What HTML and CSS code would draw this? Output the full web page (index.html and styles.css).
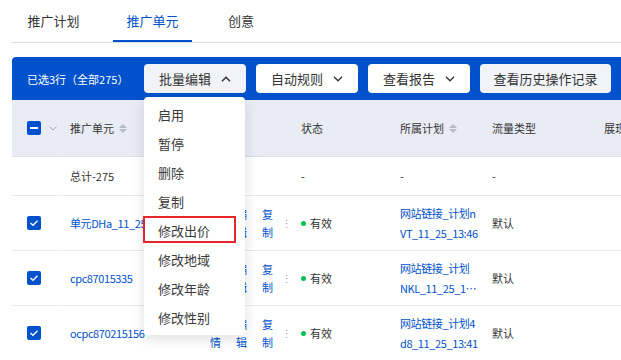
FILE: index.html
```html
<!DOCTYPE html>
<html lang="zh-CN">
<head>
    <meta charset="UTF-8">
    <meta name="viewport" content="width=device-width, initial-scale=1.0">
    <title>推广单元</title>
    <link rel="stylesheet" href="styles.css">
</head>
<body>

<div class="page">
    <div class="tabs">
        <div class="tab">推广计划</div>
        <div class="tab active">推广单元</div>
        <div class="tab">创意</div>
    </div>

    <div class="toolbar">
        <span class="selected">已选3行（全部275）</span>
        <div class="batch">
            <button class="btn btn-active">批量编辑
                <svg width="10" height="6" viewBox="0 0 10 6"><path d="M1 5.2L5 1.2L9 5.2" fill="none" stroke="#333" stroke-width="1.5"/></svg>
            </button>
            <div class="menu">
                <div class="menu-item">启用</div>
                <div class="menu-item">暂停</div>
                <div class="menu-item">删除</div>
                <div class="menu-item">复制</div>
                <div class="menu-item">修改出价<span class="mark"></span></div>
                <div class="menu-item">修改地域</div>
                <div class="menu-item">修改年龄</div>
                <div class="menu-item">修改性别</div>
            </div>
        </div>
        <button class="btn">自动规则
            <svg width="10" height="6" viewBox="0 0 10 6"><path d="M1 0.8L5 4.8L9 0.8" fill="none" stroke="#333" stroke-width="1.3"/></svg>
        </button>
        <button class="btn">查看报告
            <svg width="10" height="6" viewBox="0 0 10 6"><path d="M1 0.8L5 4.8L9 0.8" fill="none" stroke="#333" stroke-width="1.3"/></svg>
        </button>
        <button class="btn btn-wide btn-grey">查看历史操作记录</button>
    </div>

    <div class="table">
        <div class="row head">
            <div class="cell c-check">
                <span class="checkbox"><span class="minus"></span></span>
                <svg class="caret" width="8" height="5" viewBox="0 0 8 5"><path d="M0.5 0.5L4 4L7.5 0.5" fill="none" stroke="#a0a4ae" stroke-width="1"/></svg>
            </div>
            <div class="cell c-name">推广单元 <span class="sort"><i class="up"></i><i class="down"></i></span></div>
            <div class="cell c-ops">操作</div>
            <div class="cell c-status">状态</div>
            <div class="cell c-plan">所属计划 <span class="sort"><i class="up"></i><i class="down"></i></span></div>
            <div class="cell c-flow">流量类型</div>
            <div class="cell c-show">展现</div>
        </div>

        <div class="row total">
            <div class="cell c-check"></div>
            <div class="cell c-name">总计-275</div>
            <div class="cell c-ops"></div>
            <div class="cell c-status">-</div>
            <div class="cell c-plan">-</div>
            <div class="cell c-flow">-</div>
            <div class="cell c-show"></div>
        </div>

        <div class="row">
            <div class="cell c-check"><span class="checkbox"><svg width="10" height="8" viewBox="0 0 10 8"><path d="M1.5 4L4 6.3L8.5 1.8" fill="none" stroke="#fff" stroke-width="1.3"/></svg></span></div>
            <div class="cell c-name"><a class="link">单元DHa_11_25_13:46</a></div>
            <div class="cell c-ops"><a class="op">详情</a><a class="op">编辑</a><a class="op">复制</a><span class="more">⋮</span></div>
            <div class="cell c-status"><span class="dot"></span>有效</div>
            <div class="cell c-plan"><a class="plan"><span>网站链接_计划n</span><span>VT_11_25_13:46</span></a></div>
            <div class="cell c-flow">默认</div>
            <div class="cell c-show"></div>
        </div>

        <div class="row">
            <div class="cell c-check"><span class="checkbox"><svg width="10" height="8" viewBox="0 0 10 8"><path d="M1.5 4L4 6.3L8.5 1.8" fill="none" stroke="#fff" stroke-width="1.3"/></svg></span></div>
            <div class="cell c-name"><a class="link">cpc87015335</a></div>
            <div class="cell c-ops"><a class="op">详情</a><a class="op">编辑</a><a class="op">复制</a><span class="more">⋮</span></div>
            <div class="cell c-status"><span class="dot"></span>有效</div>
            <div class="cell c-plan"><a class="plan"><span>网站链接_计划</span><span>NKL_11_25_13:45:27</span></a></div>
            <div class="cell c-flow">默认</div>
            <div class="cell c-show"></div>
        </div>

        <div class="row">
            <div class="cell c-check"><span class="checkbox"><svg width="10" height="8" viewBox="0 0 10 8"><path d="M1.5 4L4 6.3L8.5 1.8" fill="none" stroke="#fff" stroke-width="1.3"/></svg></span></div>
            <div class="cell c-name"><a class="link">ocpc870215156</a></div>
            <div class="cell c-ops"><a class="op">详情</a><a class="op">编辑</a><a class="op">复制</a><span class="more">⋮</span></div>
            <div class="cell c-status"><span class="dot"></span>有效</div>
            <div class="cell c-plan"><a class="plan"><span>网站链接_计划4</span><span>d8_11_25_13:41</span></a></div>
            <div class="cell c-flow">默认</div>
            <div class="cell c-show"></div>
        </div>
    </div>
</div>

</body>
</html>
```

FILE: styles.css
```css
body {
    margin: 0;
    overflow: hidden;
    background: #fff;
    font-family: "Noto Sans CJK SC", "Noto Sans", sans-serif;
    color: #333;
}

.page {
    width: 720px;
    padding-left: 12px;
}

/* tabs */
.tabs {
    display: flex;
    gap: 20px;
    height: 42px;
    padding-left: 2px;
    border-bottom: 1px solid #d9dce5;
}

.tab {
    padding: 0 13.5px;
    font-size: 13px;
    line-height: 42px;
    color: #333;
}

.tab:last-child {
    padding-left: 16px;
}

.tab.active {
    color: #0052cc;
    box-shadow: inset 0 -2px 0 #0052cc;
}

/* toolbar */
.toolbar {
    display: flex;
    align-items: center;
    gap: 10px;
    height: 43px;
    margin-top: 14px;
    padding-left: 15px;
    background: #0052cc;
    border-radius: 4px 0 0 0;
}

.selected {
    width: 107px;
    color: #fff;
    font-size: 11px;
}

.batch {
    position: relative;
}

.btn {
    display: flex;
    align-items: center;
    justify-content: center;
    gap: 10px;
    width: 102px;
    height: 29px;
    padding: 0;
    border: none;
    border-radius: 4px;
    background: #fff;
    color: #333;
    font-family: inherit;
    font-size: 13px;
}

.btn-active, .btn-grey {
    background: #f1f3f8;
}

.btn-wide {
    width: 131px;
}

/* dropdown */
.menu {
    position: absolute;
    top: 33px;
    left: 0;
    z-index: 5;
    width: 101px;
    padding: 3px 0;
    background: #fff;
    border-radius: 4px;
    box-shadow: 0 4px 14px rgba(0, 0, 0, 0.13);
}

.menu-item {
    position: relative;
    height: 29px;
    line-height: 29px;
    padding-left: 14px;
    font-size: 13px;
    color: #3a3a3a;
}

.mark {
    position: absolute;
    left: -1px;
    top: 0;
    width: 89px;
    height: 23px;
    border: 2px solid #e6262c;
}

/* table */
.table {
    font-size: 11px;
}

.row {
    display: flex;
    height: 55px;
}

.cell {
    display: flex;
    align-items: center;
    box-sizing: border-box;
    border-bottom: 1px solid #e8eaf0;
    padding-left: 8px;
}

.head {
    height: 57px;
    background: #e9ecf4;
}

.head .cell {
    border-bottom-color: #d9dde6;
}

.total {
    height: 39px;
}

.c-check {
    width: 49px;
    margin-right: 1px;
    padding-left: 15px;
    gap: 8px;
}

.c-name { width: 135px; }
.c-ops { width: 96px; padding-left: 13px; }
.c-status { width: 99px; }
.c-plan { width: 92px; }
.c-flow { width: 112px; }
.c-show { width: 120px; }

.checkbox {
    display: flex;
    align-items: center;
    justify-content: center;
    width: 14px;
    height: 14px;
    border-radius: 2px;
    background: #0052cc;
}

.minus {
    width: 8px;
    height: 2px;
    background: #fff;
}

.sort {
    display: inline-flex;
    flex-direction: column;
    gap: 1px;
    margin-left: 5px;
}

.sort i {
    width: 0;
    height: 0;
    border-left: 4px solid transparent;
    border-right: 4px solid transparent;
}

.sort .up { border-bottom: 4px solid #b6bac4; }
.sort .down { border-top: 4px solid #b6bac4; }

.link, .op, .plan {
    color: #0052cc;
}

.link {
    white-space: nowrap;
    letter-spacing: -0.4px;
}

.op {
    width: 11px;
    margin-right: 15px;
    line-height: 18px;
}

.op:nth-child(3) {
    margin-right: 8px;
}

.more {
    color: #999;
    font-size: 11px;
}

.dot {
    width: 5px;
    height: 5px;
    margin-right: 4px;
    border-radius: 50%;
    background: #00c152;
}

.plan {
    width: 80px;
    line-height: 20px;
    letter-spacing: -0.4px;
}

.plan span {
    display: block;
    white-space: nowrap;
    overflow: hidden;
    text-overflow: ellipsis;
}
```
